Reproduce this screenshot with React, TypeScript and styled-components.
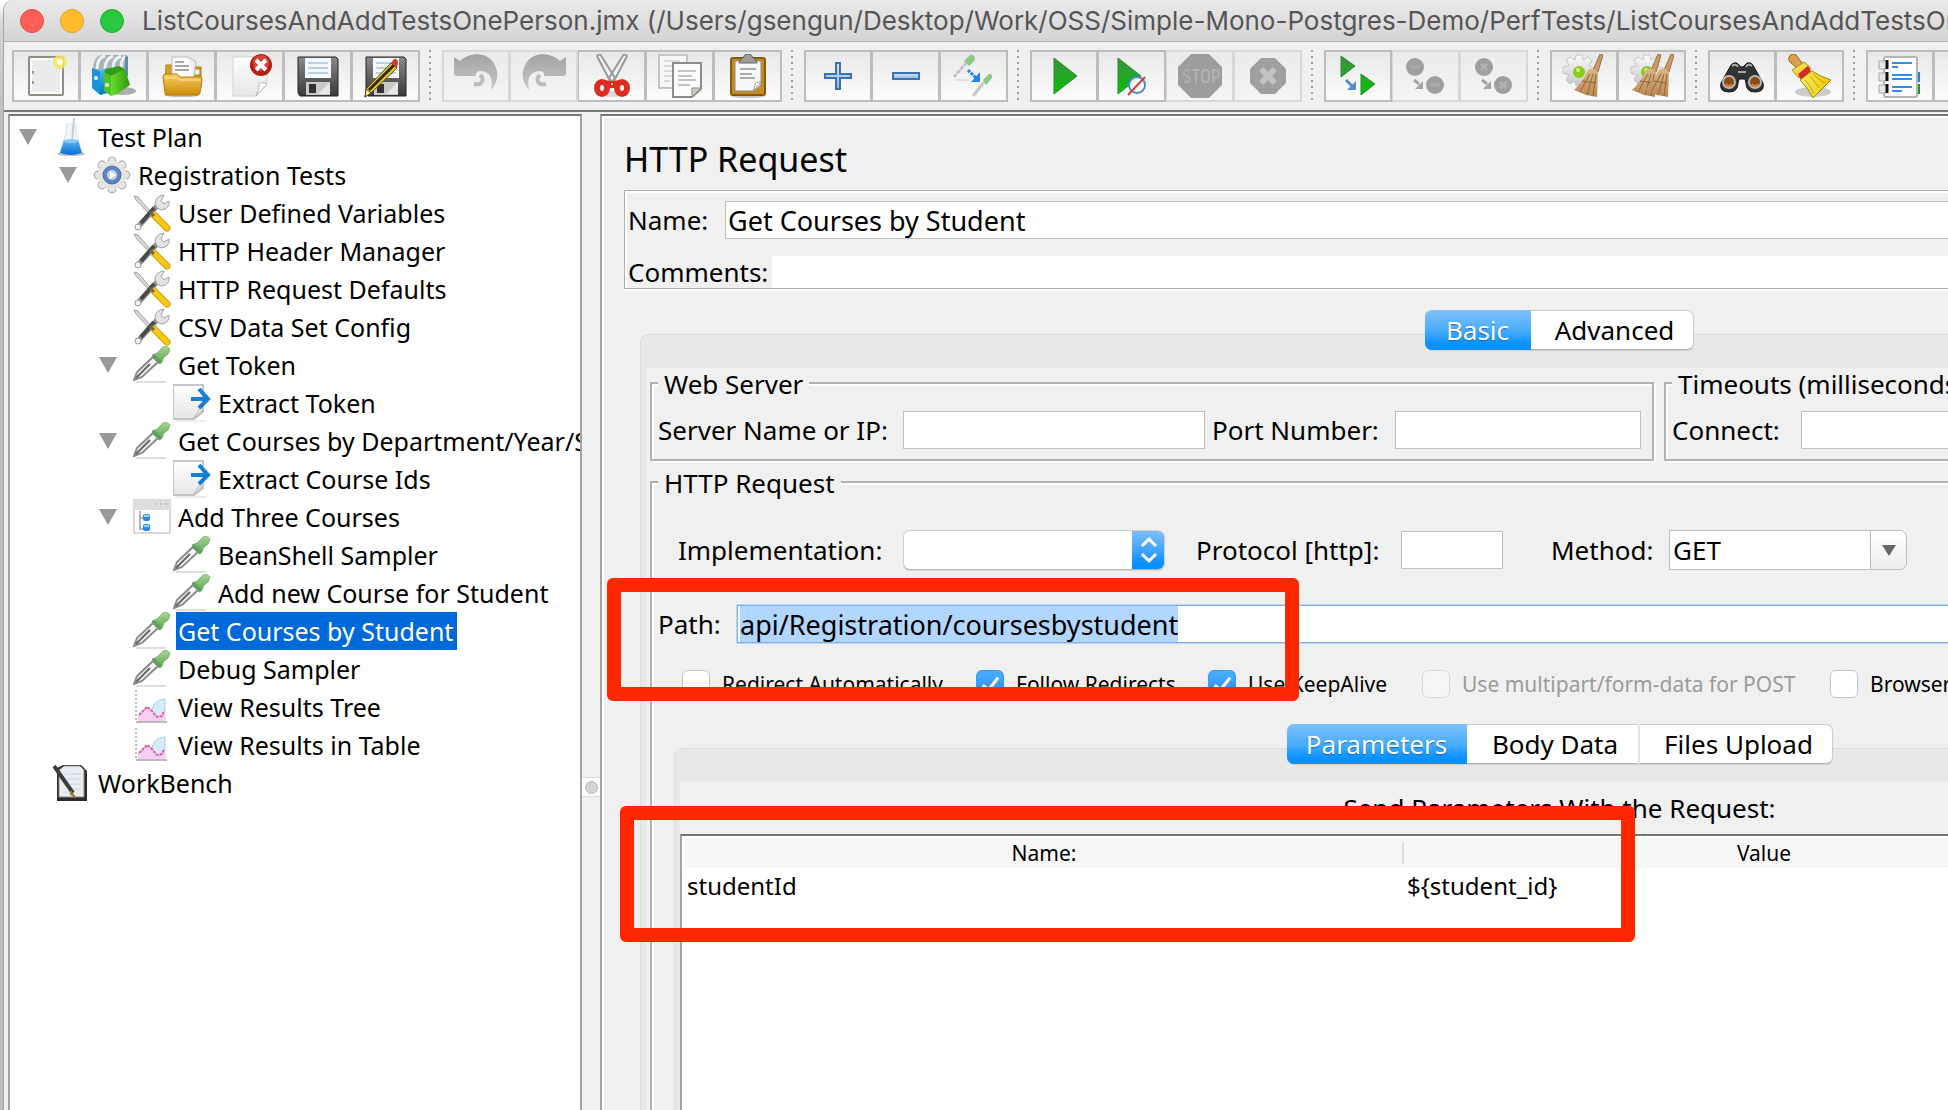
import React, { useEffect, useId, useRef } from "react";
import styled, { createGlobalStyle, css } from "styled-components";

const UI_FONT = '"Noto Sans", "Open Sans", sans-serif';

const GlobalStyle = createGlobalStyle`
  *, *::before, *::after { box-sizing: border-box; }
  html, body { margin: 0; height: 100%; }
  body { background: #c4c4c4; overflow: hidden; font-family: ${UI_FONT}; color: #000; }
  button, input, select { font: inherit; color: inherit; margin: 0; }
`;

/* ---------- window ---------- */

const Backdrop = styled.div`
  height: 100vh;
  padding-left: 4px;
  background: linear-gradient(#fff 0, #d6d6d6 24px, #bcbcbc 120px);
`;

const WindowFrame = styled.div`
  position: relative;
  display: flex;
  flex-direction: column;
  height: 100%;
  overflow: hidden;
  border-radius: 10px 0 0 0;
  background: #f0f0f0;
  box-shadow: -1px 0 0 #a6a6a6;
`;

const TitleBar = styled.header`
  flex: none;
  display: flex;
  align-items: center;
  gap: 16px;
  height: 42px;
  padding: 0 16px;
  background: linear-gradient(#eaeaea, #d4d4d4);
  border-bottom: 1px solid #b3b3b3;
  overflow: hidden;
`;

const LightButton = styled.button<{ $fill: string; $edge: string }>`
  flex: none;
  width: 24px;
  height: 24px;
  padding: 0;
  border-radius: 50%;
  border: 1px solid ${(p) => p.$edge};
  background: ${(p) => p.$fill};
`;

const TitleText = styled.h1`
  margin: 0 0 0 2px;
  font: 400 26px/34px Inter, "Liberation Sans", sans-serif;
  color: #555;
  white-space: nowrap;
`;

/* ---------- toolbar ---------- */

const ToolBar = styled.div`
  flex: none;
  display: flex;
  height: 70px;
  padding: 8px 0 0 8px;
  border-bottom: 2px solid #757575;
  overflow: hidden;
`;

const ToolGroup = styled.div`
  flex: none;
  display: flex;
  height: 52px;
`;

const ToolSeparator = styled.div`
  flex: none;
  width: 2px;
  height: 50px;
  margin: 0 11px 0 9px;
  background: repeating-linear-gradient(#a0a0a0 0 2px, transparent 2px 6px);
`;

const ToolButton = styled.button`
  flex: none;
  display: grid;
  place-items: center;
  width: 68px;
  height: 52px;
  padding: 0;
  border: 2px solid #bdbdbd;
  border-left-width: 1px;
  background: linear-gradient(#e8e8e8, #fcfcfc);

  &:first-child { border-left-width: 2px; }
  &:disabled { border-color: #d8d8d8; background: linear-gradient(#ebebeb, #f4f4f4); }
`;

/* ---------- split panes ---------- */

const Split = styled.div`
  flex: 1;
  display: flex;
  min-height: 0;
  padding: 2px 0 0 4px;
`;

const TreePane = styled.nav`
  flex: none;
  width: 574px;
  padding: 2px 1px 0 0;
  overflow: hidden;
  border: 2px solid #a3a3a3;
  border-top-color: #757575;
  border-bottom: 0;
  background: #fff;
`;

const Divider = styled.div`
  flex: none;
  display: flex;
  width: 18px;
  padding-top: 663px;
`;

const DividerGrip = styled.div`
  display: grid;
  place-items: center;
  width: 18px;
  height: 20px;
  background: #fcfcfc;
  border: solid #dcdcdc;
  border-width: 1px 0;

  &::before {
    content: "";
    width: 13px;
    height: 13px;
    border-radius: 50%;
    border: 1px solid #b8b8b8;
    background: #d4d4d4;
  }
`;

const EditorPane = styled.main`
  flex: 1;
  min-width: 0;
  overflow: hidden;
  border: solid #a3a3a3;
  border-width: 2px 0 0 2px;
  border-top-color: #757575;
  box-shadow: inset 2px 2px 0 #fff;
`;

/* ---------- tree ---------- */

const TreeList = styled.ul`
  margin: 0;
  padding: 0;
  list-style: none;
`;

const TreeRow = styled.li<{ $level: number }>`
  display: flex;
  align-items: center;
  height: 38px;
  padding-left: ${(p) => 9 + p.$level * 40}px;
  font-size: 25px;
  line-height: 38px;
  white-space: nowrap;
`;

const Twisty = styled.button`
  flex: none;
  width: 18px;
  height: 16px;
  margin-right: 16px;
  padding: 0;
  border: 0;
  background: #999;
  clip-path: polygon(0 0, 100% 0, 50% 100%);
`;

const TwistyGap = styled.span`
  flex: none;
  width: 34px;
`;

const TreeLabel = styled.span<{ $selected?: boolean }>`
  margin-left: 5px;
  padding: 0 4px 0 2px;
  ${(p) => p.$selected && css`background: #0069d9; color: #fff;`}
`;

/* ---------- form ---------- */

const Form = styled.form`
  min-width: 1912px;
  padding: 23px 20px 0 22px;
`;

const PageTitle = styled.h2`
  margin: 0 0 11px;
  font-size: 34px;
  font-weight: 400;
  line-height: 40px;
`;

const NameBox = styled.section`
  display: flex;
  flex-direction: column;
  gap: 17px;
  margin-bottom: 21px;
  padding: 10px 4px 0 3px;
  border: 1px solid #b0b0b0;
  box-shadow: inset 2px 2px 0 #fff, 0 2px 0 #fff;
`;

const Row = styled.div<{ $indent?: number }>`
  display: flex;
  align-items: center;
  padding-left: ${(p) => p.$indent ?? 0}px;
  font-size: 26px;
  line-height: 32px;
  white-space: nowrap;
`;

const Label = styled.label<{ $w: number; $before?: number }>`
  flex: none;
  width: ${(p) => p.$w}px;
  margin-left: ${(p) => p.$before ?? 0}px;
`;

const TextField = styled.input<{ $w?: number }>`
  ${(p) => (p.$w ? css`flex: none; width: ${p.$w}px;` : css`flex: 1; min-width: 0;`)}
  height: 38px;
  padding: 0 2px;
  border: 1px solid #c0c0c0;
  border-radius: 0;
  background: #fff;
  font-size: 27px;
  line-height: 32px;
  outline: none;
`;

const PlainField = styled(TextField)`
  height: 32px;
  border: 0;
`;

const PathField = styled(TextField)`
  border-color: #7fb0e4;
  box-shadow: 0 0 0 1px #b9d7f4;
  &::selection { background: #b1d6ff; color: #000; }
`;

const PopUp = styled.span<{ $w: number }>`
  flex: none;
  display: flex;
  width: ${(p) => p.$w}px;
  height: 40px;
  overflow: hidden;
  border: 1px solid #cfcfcf;
  border-bottom-color: #b4b4b4;
  border-radius: 7px;
  background: #fff;
  box-shadow: 0 1px 1px #d8d8d8;
`;

const PopUpCap = styled.span`
  display: grid;
  place-items: center;
  width: 33px;
  margin: -1px;
  background: linear-gradient(#7fc1fd, #3ba2fb 55%, #068fff 85%);
`;

const BareSelect = styled.select`
  flex: 1;
  min-width: 0;
  padding: 0 3px;
  border: 0;
  background: transparent;
  appearance: none;
  outline: none;
`;

const ComboBox = styled.span<{ $w: number }>`
  flex: none;
  display: flex;
  width: ${(p) => p.$w}px;
  height: 40px;
  border: 1px solid #bcbcbc;
  border-radius: 0 7px 7px 0;
  background: #fff;
`;

const ComboCap = styled.span`
  display: grid;
  place-items: center;
  width: 36px;
  border-left: 1px solid #bcbcbc;
  border-radius: 0 7px 7px 0;
  background: linear-gradient(#fff, #ededed);
  box-shadow: 0 1px 1px #c4c4c4;
`;

const Group = styled.fieldset<{ $grow?: boolean }>`
  flex: ${(p) => (p.$grow ? "1" : "none")};
  min-width: 0;
  margin: 0;
  padding: 13px 11px 10px 6px;
  border: 2px solid #b2b2b2;
  box-shadow: inset 2px 2px 0 #fff, 2px 2px 0 #fff;
`;

const RequestGroup = styled(Group)`
  padding: 33px 5px 8px 6px;
`;

const GroupTitle = styled.legend`
  padding: 2px 6px 0;
  background: #f0f0f0;
  font-size: 26px;
  line-height: 28px;
  white-space: nowrap;
`;

const GroupRow = styled.div`
  display: flex;
  gap: 10px;
  margin-bottom: 6px;
`;

const Stack = styled.div`
  display: flex;
  flex-direction: column;
`;

const Space = styled.div<{ $h: number }>`
  height: ${(p) => p.$h}px;
`;

/* ---------- check boxes ---------- */

const CheckRow = styled.div`
  display: grid;
  grid-template-columns: 294px 232px 214px 408px auto;
  padding-left: 24px;
  font-size: 21px;
  line-height: 28px;
  white-space: nowrap;
`;

const CheckLabel = styled.label<{ $dim?: boolean }>`
  display: flex;
  align-items: center;
  gap: 12px;
  color: ${(p) => (p.$dim ? "#9b9b9b" : "#000")};
`;

const CHECK_MARK = css`
  content: "";
  width: 9px;
  height: 17px;
  margin-bottom: 4px;
  border: solid #fff;
  border-width: 0 3px 3px 0;
  transform: rotate(38deg);
`;

const CheckBox = styled.input`
  display: grid;
  place-items: center;
  flex: none;
  width: 28px;
  height: 28px;
  appearance: none;
  border: 1px solid #c2c2c2;
  border-radius: 6px;
  background: #fff;

  &:checked { border-color: #3b9bf5; background: linear-gradient(#4badfb, #1e8ffb); }
  &:checked::before { ${CHECK_MARK} }
  &:disabled { border-color: #d6d6d6; background: #f6f6f6; }
`;

/* ---------- tabs ---------- */

const TabFrame = styled.div<{ $inset: number }>`
  margin: 0 ${(p) => p.$inset}px;
`;

const TabStrip = styled.div`
  position: relative;
  z-index: 1;
  display: flex;
  width: fit-content;
  height: 40px;
  margin: 0 auto -16px;
  border: 1px solid #cdcdcd;
  border-bottom-color: #b0b0b0;
  border-radius: 7px;
  background: #fff;
  box-shadow: 0 1px 1px #d0d0d0;
`;

const Tab = styled.button<{ $w: number }>`
  width: ${(p) => p.$w}px;
  height: 40px;
  margin: -1px 0;
  padding: 0 0 0 6px;
  border: 0;
  border-left: 2px solid #e4e4e4;
  background: transparent;
  font-size: 26px;
  line-height: 32px;

  &[aria-selected="true"] {
    margin-left: -1px;
    padding: 0;
    border: 0;
    border-radius: 7px 0 0 7px;
    background: linear-gradient(#7fc1fd, #4badfb 50%, #0a91ff 85%);
    color: #fff;
    text-shadow: 0 1px 1px #1462ad;
  }
  &[aria-selected="true"] + & { border-left: 0; }
`;

const TabBody = styled.div`
  padding: 33px 5px 5px;
  border: 1px solid #dddddd;
  border-radius: 8px;
  background: #e8e8e8;
`;

const TabContent = styled.div<{ $side: number }>`
  padding: 0 ${(p) => p.$side}px;
  background: #f0f0f0;
`;

/* ---------- parameter table ---------- */

const Caption = styled.p`
  margin: 0;
  font-size: 26px;
  line-height: 52px;
  text-align: center;
`;

const TableWell = styled.div`
  min-height: 420px;
  padding: 2px;
  border: 2px solid #a3a3a3;
  border-top-color: #757575;
  background: #fff;
`;

const ParamTable = styled.table`
  width: 100%;
  border-collapse: collapse;
  table-layout: fixed;
`;

const HeadCell = styled.th`
  height: 30px;
  padding: 0;
  background: #f7f7f7 linear-gradient(#e0e0e0, #e0e0e0) right center / 2px 22px no-repeat;
  font-size: 21px;
  font-weight: 400;
  line-height: 30px;
`;

const Cell = styled.td`
  height: 36px;
  padding: 0 3px;
  font-size: 24px;
  line-height: 36px;
`;

const Column = styled.col<{ $w?: number }>`
  width: ${(p) => (p.$w ? `${p.$w}px` : "auto")};
`;

/* ---------- markers drawn over the window ---------- */

const Marker = styled.div<{ $x: number; $y: number; $w: number; $h: number }>`
  position: absolute;
  left: ${(p) => p.$x}px;
  top: ${(p) => p.$y}px;
  width: ${(p) => p.$w}px;
  height: ${(p) => p.$h}px;
  border: 14px solid #ff2700;
  border-radius: 6px;
  pointer-events: none;
`;

/* ---------- toolbar icons, 44 x 44 ---------- */

const Svg44 = ({ children }: { children: React.ReactNode }) => (
  <svg width="44" height="44" viewBox="0 0 44 44" aria-hidden="true">{children}</svg>
);

const Grad = ({ id, a, b, flat }: { id: string; a: string; b: string; flat?: boolean }) => (
  <linearGradient id={id} x1="0" y1="0" x2={flat ? "1" : "0"} y2={flat ? "0" : "1"}>
    <stop offset="0" stopColor={a} />
    <stop offset="1" stopColor={b} />
  </linearGradient>
);

const DefsHolder = styled.svg`
  position: absolute;
`;

const SharedDefs = () => (
  <DefsHolder width="0" height="0" aria-hidden="true">
    <defs>
      <Grad id="gPaper" a="#ffffff" b="#e6e6e6" />
      <Grad id="gFolder" a="#fbd06a" b="#c98a05" />
      <Grad id="gSteel" a="#8a8a8a" b="#3a3a3a" />
      <Grad id="gGrey" a="#a2a2a2" b="#c9c9c9" />
      <Grad id="gPlay" a="#3f8f42" b="#06c206" />
      <Grad id="gPlus" a="#dce9f8" b="#8db5e2" />
      <Grad id="gBlueBook" a="#4fc0f0" b="#0879bd" />
      <Grad id="gGreenBook" a="#6edb2c" b="#2a9a08" flat />
      <Grad id="gBroom" a="#dcb685" b="#b88752" />
      <Grad id="gYellow" a="#f8ea66" b="#ecc800" flat />
      <Grad id="gGear" a="#fafafa" b="#c8c8c8" />
      <Grad id="gWater" a="#5fb4f4" b="#0a6fd0" />
      <Grad id="gStopper" a="#a9d892" b="#56a052" />
    </defs>
  </DefsHolder>
);

const NewIcon = () => (
  <Svg44>
    <rect x="5" y="3" width="34" height="38" rx="1" fill="#ebebeb" stroke="#8d8d84" strokeWidth="2" />
    <rect x="7" y="5" width="30" height="34" fill="none" stroke="#fff" strokeWidth="2" />
    <path d="M9 17v3M9 27v3" stroke="#999" strokeWidth="2" />
    <circle cx="36" cy="8" r="7" fill="#f3e45c" opacity=".85" />
    <circle cx="36" cy="8" r="3" fill="#fffde0" />
  </Svg44>
);

const TemplatesIcon = () => (
  <Svg44>
    <ellipse cx="31" cy="37" rx="13" ry="4" fill="#000" opacity=".3" />
    <path d="M1 16C1 6 5 1 10 1l25 0v20L22 24z" fill="#a9b4ba" />
    <path d="M5 15C5 7 8 3 13 2M13 15c0-6 3-11 8-13M21 14c0-6 3-10 8-12M29 14c0-5 1-9 4-12" stroke="#eef2f4" strokeWidth="3" fill="none" />
    <path d="M0 14l8 3v24l-8-7z" fill="#1795d8" />
    <path d="M8 17l8-4v26l-8 2z" fill="url(#gBlueBook)" />
    <path d="M33 3l3-1v20h-3z" fill="#5a8cab" />
    <circle cx="4" cy="24" r="2" fill="#fff" />
    <path d="M12 18l7 4v20l-7-5z" fill="#4cc428" />
    <path d="M19 22l14-7 5 16-13 9-6 2z" fill="url(#gGreenBook)" />
    <path d="M14 15l13-3 6 3-14 7-7-4z" fill="#2f9e14" />
    <circle cx="15" cy="31" r="2" fill="#fff" />
  </Svg44>
);

const OpenIcon = () => (
  <Svg44>
    <ellipse cx="22" cy="41" rx="18" ry="2" fill="#000" opacity=".25" />
    <path d="M6 11h10v10h24V15h-6l0-2h7v20H5z" fill="#d99f22" stroke="#b37c10" />
    <path d="M12 3h16l6 7v16H12z" fill="#fbfbfb" stroke="#b9b9b9" />
    <path d="M15 8h9M15 12h14M15 16h14" stroke="#a8a8a8" strokeWidth="2" />
    <path d="M28 3l8 5-2 14" fill="#eee" stroke="#b9b9b9" />
    <path d="M3 23q0-3 3-3h11l3 3h20q2 0 2 3l-2 13q-1 2-3 2H7q-2 0-2-2z" fill="url(#gFolder)" stroke="#b57d0d" />
    <path d="M5 24h12l3 2h20" stroke="#fde4a0" fill="none" />
  </Svg44>
);

const CloseIcon = () => (
  <Svg44>
    <path d="M5 3h34v27l-11 12H5z" fill="url(#gPaper)" stroke="#d4d4d4" />
    <path d="M39 30c-4-2-7-1-8 0 0 4-1 8-3 12z" fill="#fff" stroke="#b5b5b5" />
    <circle cx="33" cy="11" r="11" fill="#b91c12" />
    <circle cx="33" cy="9" r="8" fill="#dc5a4c" opacity=".7" />
    <path d="M28 6l10 10M38 6L28 16" stroke="#fff" strokeWidth="4" />
  </Svg44>
);

const FloppyBody = () => (
  <>
    <path d="M2 3h38l2 2v37H4l-2-3z" fill="url(#gSteel)" stroke="#222" />
    <rect x="9" y="4" width="26" height="20" fill="#f4f9ff" />
    <path d="M12 9h20M12 14h20M12 19h20" stroke="#b9cfe2" strokeWidth="2" />
    <path d="M10 28h24v13H10z" fill="#c9c9c9" />
    <rect x="13" y="30" width="7" height="9" fill="#333" />
    <path d="M22 40l12-12v12z" fill="#e7e7e7" />
  </>
);

const SaveIcon = () => <Svg44><FloppyBody /></Svg44>;

const SaveAsIcon = () => (
  <Svg44>
    <FloppyBody />
    <path d="M2 35L27 9l6 5L7 39l-6 4z" fill="#e9c72c" stroke="#5b4a0a" />
    <path d="M5 36l25-25" stroke="#2b2b2b" strokeWidth="3" />
    <path d="M27 9l3-4q3-1 4 3l-1 6z" fill="#d8382c" />
    <path d="M2 35l5 4-6 4z" fill="#efe3c2" stroke="#5b4a0a" />
  </Svg44>
);

const UndoShape = () => (
  <>
    <path d="M0 3l6 4C16-2 32-2 39 8c7 10 5 20-2 28 2-9 0-16-6-18-5-2-10-1-9 4H3q-3 0-3-3z" fill="url(#gGrey)" />
    <path d="M20 30c8 2 11-5 6-9" fill="none" stroke="#bdbdbd" strokeWidth="4" />
  </>
);

const UndoIcon = () => <Svg44><UndoShape /></Svg44>;
const RedoIcon = () => <Svg44><g transform="matrix(-1 0 0 1 44 0)"><UndoShape /></g></Svg44>;

const CutIcon = () => (
  <Svg44>
    <ellipse cx="22" cy="40" rx="15" ry="3" fill="#000" opacity=".12" />
    <path d="M7 2l3-2 15 24-4 5zM37 2l-3-2-15 24 4 5z" fill="#f2f2f2" stroke="#9b9b9b" strokeWidth="2" />
    <ellipse cx="12" cy="34" rx="5" ry="6" fill="none" stroke="#e02c20" strokeWidth="6" />
    <ellipse cx="32" cy="34" rx="5" ry="6" fill="none" stroke="#e02c20" strokeWidth="6" />
    <path d="M13 26l9 1 9-1-6 8h-6z" fill="#e02c20" />
    <circle cx="22" cy="30" r="1" fill="#fff" />
  </Svg44>
);

const CopyIcon = () => (
  <Svg44>
    <path d="M1 1h28v33H1z" fill="#f7f7f7" stroke="#c4c4c4" strokeWidth="2" />
    <path d="M6 7h16M6 12h8M6 17h8M6 22h8M6 27h6" stroke="#dadada" strokeWidth="2" />
    <path d="M15 9h28v26l-9 8H15z" fill="#fcfcfc" stroke="#8d8d86" strokeWidth="2" />
    <path d="M20 17h18M20 22h14M20 26h18M20 31h12" stroke="#c2c2c2" strokeWidth="2" />
    <path d="M43 34h-9v9z" fill="#c9c9c4" stroke="#8d8d86" />
  </Svg44>
);

const PasteIcon = () => (
  <Svg44>
    <ellipse cx="22" cy="42" rx="17" ry="2" fill="#000" opacity=".2" />
    <rect x="5" y="4" width="34" height="37" rx="2" fill="#c48b28" stroke="#87590a" strokeWidth="2" />
    <path d="M9 7h26v24l-7 6H9z" fill="#f8f8f8" stroke="#8d8d86" />
    <path d="M14 15h16M14 20h12M14 24h15" stroke="#aaa" strokeWidth="2" />
    <path d="M35 28q-6 0-6 3l-2 6z" fill="#fff" stroke="#9a9a95" />
    <path d="M13 9q0-4 4-5 1-4 5-4t5 4q4 1 4 5z" fill="#9b9b97" stroke="#666" />
  </Svg44>
);

const PlusIcon = () => (
  <Svg44>
    <path d="M20 9h4v11h11v4H24v11h-4V24H9v-4h11z" fill="url(#gPlus)" stroke="#3c72b4" strokeWidth="2" />
  </Svg44>
);

const MinusIcon = () => (
  <Svg44>
    <rect x="9" y="19" width="26" height="6" fill="url(#gPlus)" stroke="#3c72b4" strokeWidth="2" />
  </Svg44>
);

const ToggleIcon = () => (
  <Svg44>
    <path d="M2 23L14 9" stroke="#c4c4c4" strokeWidth="3" strokeDasharray="4 1" />
    <path d="M12 7l6-6q5-1 5 5l-6 6z" fill="#8fc783" />
    <path d="M3 26h14" stroke="#e2e2e2" strokeWidth="2" />
    <path d="M21 42l11-14" stroke="#c9c9c9" strokeWidth="3" />
    <path d="M31 26l6-6q4 0 3 4l-6 7z" fill="#8fc783" />
    <path d="M16 16l8 8" stroke="#1e86f4" strokeWidth="3" strokeDasharray="3 1" />
    <path d="M28 18v10H19z" fill="#1e86f4" />
  </Svg44>
);

const PlayIcon = () => (
  <Svg44>
    <path d="M12 4l23 18-23 18z" fill="url(#gPlay)" stroke="#2a8a2e" />
  </Svg44>
);

const PlayNoTimersIcon = () => (
  <Svg44>
    <path d="M8 4l23 18L8 40z" fill="url(#gPlay)" stroke="#2a8a2e" />
    <circle cx="27" cy="31" r="8" fill="#fff" fillOpacity=".85" stroke="#4a86c8" strokeWidth="2" />
    <path d="M18 41l17-18" stroke="#d83a3a" strokeWidth="2" />
  </Svg44>
);

const StopIcon = () => (
  <Svg44>
    <path d="M13 0h18l13 13v18L31 44H13L0 31V13z" fill="#9d9d9d" />
    <g fill="none" stroke="#b0b0b0" strokeWidth="2">
      <path d="M12 17q-6-3-6 2 0 2 3 3t3 3q-1 5-6 2M14 16h8M18 16v13M35 29V16h3q3 0 3 4t-6 4" />
      <rect x="24" y="16" width="7" height="12" rx="3" />
    </g>
  </Svg44>
);

const OctagonX = ({ x, y, s }: { x: number; y: number; s: number }) => (
  <g transform={`translate(${x} ${y}) scale(${s})`}>
    <path d="M11 0h14l11 11v14L25 36H11L0 25V11z" fill="#9f9f9f" />
    <path d="M11 11l14 14M25 11L11 25" stroke="#c2c2c2" strokeWidth="6" />
  </g>
);

const ShutdownIcon = () => <Svg44><OctagonX x={4} y={4} s={1} /></Svg44>;

const RemoteStartIcon = () => (
  <Svg44>
    <path d="M5 2l14 10L5 23zM25 20l14 10-14 11z" fill="url(#gPlay)" stroke="#2a8a2e" />
    <path d="M10 26l6 6" stroke="#5a8cc8" strokeWidth="3" />
    <path d="M20 27v9h-9z" fill="#5a8cc8" />
  </Svg44>
);

const GreyArrow = () => (
  <>
    <path d="M10 26l5 4" stroke="#a4a4a4" strokeWidth="3" />
    <path d="M19 27v8h-8z" fill="#a4a4a4" />
  </>
);

const RemoteStopIcon = () => (
  <Svg44>
    <circle cx="11" cy="13" r="9" fill="#9f9f9f" />
    <circle cx="31" cy="31" r="9" fill="#9f9f9f" />
    <path d="M6 13h10M26 31h10" stroke="#a9a9a9" strokeWidth="4" />
    <GreyArrow />
  </Svg44>
);

const RemoteShutdownIcon = () => (
  <Svg44>
    <circle cx="12" cy="13" r="9" fill="#9f9f9f" />
    <circle cx="31" cy="31" r="9" fill="#9f9f9f" />
    <path d="M9 10l6 6M15 10l-6 6M28 28l6 6M34 28l-6 6" stroke="#b2b2b2" strokeWidth="3" />
    <GreyArrow />
  </Svg44>
);

const GearShape = () => (
  <>
    <path d="M14 1h6l1 5 5-3 4 4-3 5 6 2v6l-6 1 3 6-4 3-5-3-1 5h-6l-1-5-5 3-4-4 3-5-6-2v-6l6-1-3-6 4-3 5 3z" fill="url(#gGear)" stroke="#c4c4c4" />
    <circle cx="17" cy="18" r="6" fill="#86cc1c" />
    <circle cx="16" cy="16" r="2" fill="#d2f08c" />
  </>
);

const BroomShape = () => (
  <>
    <path d="M38 0l3 1-5 17-5-2z" fill="#c79b68" stroke="#9c7344" />
    <path d="M26 16q5-4 10 2l-1 25-11-2-12-5q9-8 14-20z" fill="url(#gBroom)" />
    <path d="M28 20L18 38M31 20l-6 21M34 20l-3 22M20 27l14 2" stroke="#8e673b" fill="none" />
  </>
);

const ClearIcon = () => <Svg44><GearShape /><BroomShape /></Svg44>;
const ClearAllIcon = () => (
  <Svg44>
    <GearShape />
    <g transform="translate(-10 0)"><BroomShape /></g>
    <g transform="translate(3 0)"><BroomShape /></g>
  </Svg44>
);

const SearchIcon = () => (
  <Svg44>
    <path d="M10 13q2-5 7-4l4 4h2l4-4q5-1 7 4l9 16q2 9-8 9-9 0-9-9l-1-4h-6l-1 4q0 9-9 9-10 0-8-9z" fill="#333" stroke="#111" />
    <path d="M12 12q4-3 6 1M26 13q2-4 6-1M18 18h8" stroke="#a9a9a9" strokeWidth="2" fill="none" />
    <circle cx="9" cy="28" r="6" fill="#8a4a14" stroke="#b8b8b8" strokeWidth="2" />
    <circle cx="35" cy="28" r="6" fill="#8a4a14" stroke="#b8b8b8" strokeWidth="2" />
    <path d="M6 30q3 4 6 0M32 30q3 4 6 0" stroke="#d98a35" strokeWidth="2" fill="none" />
  </Svg44>
);

const ResetSearchIcon = () => (
  <Svg44>
    <ellipse cx="25" cy="38" rx="18" ry="5" fill="#000" opacity=".18" />
    <path d="M1 3q3-5 7-2l6 8-5 5-7-6q-2-2-1-5z" fill="#d9a04c" stroke="#8f6118" />
    <path d="M4 16l12-8 7 6-12 10z" fill="#f0d84a" stroke="#b58a10" />
    <path d="M10 20l10-8 3 5-10 9z" fill="#d42a1c" />
    <path d="M12 26l12-9q9 6 19 9L25 44q-4-9-13-18z" fill="url(#gYellow)" stroke="#a88508" />
    <path d="M17 26q6 6 9 14M22 22q5 6 9 12M25 20q6 6 12 9" stroke="#c4a40a" fill="none" />
  </Svg44>
);

const FunctionIcon = () => (
  <Svg44>
    <path d="M36 18h6v10h-6z" fill="#2b7ce0" />
    <path d="M36 30h6v10h-6z" fill="#1d9a1d" />
    <rect x="6" y="3" width="33" height="40" rx="2" fill="#fff" stroke="#b5b5b5" strokeWidth="2" />
    <path d="M1 7h8v8H1zM1 19h8v8H1zM1 31h8v8H1z" fill="#e6e6e6" stroke="#aaa" />
    <path d="M9 6v9M9 18v9M9 30v9" stroke="#111" strokeWidth="3" />
    <path d="M14 9h20M14 13h6M14 21h20M14 25h20M14 33h20M14 37h10" stroke="#2f8df5" strokeWidth="2" />
  </Svg44>
);

/* ---------- tree icons, 38 x 38 ---------- */

const TreeGlyph = styled.svg`
  flex: none;
  width: 38px;
  height: 38px;
`;

const Svg38 = ({ children }: { children: React.ReactNode }) => (
  <TreeGlyph viewBox="0 0 38 38" aria-hidden="true">{children}</TreeGlyph>
);

const FlaskIcon = () => (
  <Svg38>
    <ellipse cx="18" cy="36" rx="14" ry="2" fill="#777" opacity=".5" />
    <path d="M13 6h10v8l6 21q-11 4-22 0l6-21z" fill="#f0f5f9" stroke="#dde4e9" />
    <path d="M11 22h14l4 13q-11 4-22 0z" fill="url(#gWater)" />
    <path d="M21 0l-2 24" stroke="#c6ced4" strokeWidth="2" />
    <ellipse cx="18" cy="23" rx="7" ry="2" fill="#8cccf8" />
  </Svg38>
);

const ThreadIcon = () => (
  <Svg38>
    <g fill="#e6e6e6" stroke="#a9a9a9">
      {[0, 45, 90, 135, 180, 225, 270, 315].map((a) => (
        <circle key={a} cx="19" cy="5" r="4" transform={`rotate(${a} 19 19)`} />
      ))}
    </g>
    <circle cx="19" cy="19" r="14" fill="#e4e4e4" />
    <circle cx="19" cy="19" r="9" fill="#5d86c4" stroke="#44699f" />
    <circle cx="19" cy="19" r="5" fill="#c3d3ea" />
    <path d="M17 15l6 4-6 4z" fill="#fff" />
  </Svg38>
);

const ToolsIcon = () => (
  <Svg38>
    <path d="M1 2l4 1 13 15-2 2L3 6z" fill="#d8d8d8" stroke="#a2a2a2" />
    <path d="M4 34L24 12" stroke="#8a8a8a" strokeWidth="5" />
    <path d="M8 29l13-15" stroke="#4a4a4a" strokeWidth="4" />
    <circle cx="5" cy="33" r="3" fill="#f4f4f4" stroke="#999" />
    <path d="M22 10q0-8 9-9l-3 6 3 3 5-3q1 8-8 9l-4-2z" fill="#e4e4e4" stroke="#a2a2a2" />
    <path d="M21 21l13 13" stroke="#d49f00" strokeWidth="7" strokeLinecap="round" />
    <path d="M21 21l13 13" stroke="#f7c915" strokeWidth="5" strokeLinecap="round" />
    <path d="M17 18l4 4" stroke="#666" strokeWidth="3" />
  </Svg38>
);

const DropperIcon = () => (
  <Svg38>
    <path d="M3 36h30" stroke="#dedede" strokeWidth="2" />
    <path d="M1 34l3-8L20 11l5 5L9 31z" fill="#f4f4f4" stroke="#8b8b8b" strokeWidth="2" />
    <path d="M3 32l14-14" stroke="#666" strokeWidth="2" />
    <path d="M19 9l5-2 6-6q4-2 7 2-1 6-6 8l-2 5-3 2z" fill="url(#gStopper)" stroke="#7eb877" />
    <path d="M20 9l8 8" stroke="#5d9f5c" strokeWidth="3" />
  </Svg38>
);

const ExtractIcon = () => (
  <Svg38>
    <path d="M3 37h30" stroke="#d8d8d8" strokeWidth="1" />
    <path d="M0 1h30v27l-9 7H0z" fill="url(#gPaper)" stroke="#c4c4c4" strokeWidth="2" />
    <path d="M28 23l-8 12M30 25l-8 9" stroke="#b8b8b8" strokeWidth="1" />
    <path d="M18 15h16M26 5l9 10-9 9" stroke="#1680d8" strokeWidth="4" fill="none" />
  </Svg38>
);

const ControllerIcon = () => (
  <Svg38>
    <rect x="1" y="2" width="36" height="33" fill="#fff" stroke="#d8d8d8" strokeWidth="2" />
    <path d="M0 2h38v10H0z" fill="#dedede" />
    <path d="M22 6h2M27 6h2M32 6h2" stroke="#c4c4c4" strokeWidth="2" />
    <path d="M7 13v18h5M7 20h4" stroke="#b5b5b5" strokeWidth="2" fill="none" />
    <rect x="10" y="16" width="7" height="7" rx="2" fill="#2488e4" />
    <rect x="10" y="26" width="7" height="7" rx="2" fill="#2488e4" />
    <path d="M11 18h5M11 28h5" stroke="#a4d3fb" strokeWidth="2" />
  </Svg38>
);

const ResultsIcon = () => (
  <Svg38>
    <path d="M3 2v32" stroke="#bbb" strokeWidth="2" strokeDasharray="2 2" />
    <path d="M3 34h31" stroke="#bbb" strokeWidth="2" />
    <path d="M19 27q-1-15 13-16v21z" fill="#d6ebfd" stroke="#8dbbe8" strokeDasharray="2 1" />
    <path d="M5 33v-6l9-8 4 3 6 8 8-7v10z" fill="#fbccf4" />
    <path d="M6 27l8-8 4 3 6 7 5-1 2-5" stroke="#d8659a" strokeWidth="2" strokeDasharray="3 1" fill="none" />
  </Svg38>
);

const WorkBenchIcon = () => (
  <Svg38>
    <path d="M4 4l6-3h18l6 6v30H4z" fill="#2b2b2b" />
    <path d="M6 6l5-4h16l4 4v27H6z" fill="#e9eef2" stroke="#888" />
    <path d="M12 10h16M14 15h14M17 20h11M20 25h8M10 28h6" stroke="#bfd3e6" strokeWidth="1" />
    <path d="M1 2l19 27" stroke="#3d3d3d" strokeWidth="4" />
    <path d="M18 27l5 7-6-4z" fill="#9b7a33" stroke="#9b7a33" />
  </Svg38>
);

/* ---------- data ---------- */

type Tool = { name: string; Icon: React.FC; off?: boolean };

const TOOL_GROUPS: Tool[][] = [
  [
    { name: "New", Icon: NewIcon },
    { name: "Templates", Icon: TemplatesIcon },
    { name: "Open", Icon: OpenIcon },
    { name: "Close", Icon: CloseIcon },
    { name: "Save", Icon: SaveIcon },
    { name: "Save as", Icon: SaveAsIcon },
  ],
  [
    { name: "Undo", Icon: UndoIcon, off: true },
    { name: "Redo", Icon: RedoIcon, off: true },
    { name: "Cut", Icon: CutIcon },
    { name: "Copy", Icon: CopyIcon },
    { name: "Paste", Icon: PasteIcon },
  ],
  [
    { name: "Expand all", Icon: PlusIcon },
    { name: "Collapse all", Icon: MinusIcon },
    { name: "Toggle", Icon: ToggleIcon },
  ],
  [
    { name: "Start", Icon: PlayIcon },
    { name: "Start no pauses", Icon: PlayNoTimersIcon },
    { name: "Stop", Icon: StopIcon, off: true },
    { name: "Shutdown", Icon: ShutdownIcon, off: true },
  ],
  [
    { name: "Remote start all", Icon: RemoteStartIcon },
    { name: "Remote stop all", Icon: RemoteStopIcon, off: true },
    { name: "Remote shutdown all", Icon: RemoteShutdownIcon, off: true },
  ],
  [
    { name: "Clear", Icon: ClearIcon },
    { name: "Clear all", Icon: ClearAllIcon },
  ],
  [
    { name: "Search", Icon: SearchIcon },
    { name: "Reset search", Icon: ResetSearchIcon },
  ],
  [
    { name: "Function helper", Icon: FunctionIcon },
    { name: "Help", Icon: NewIcon },
  ],
];

type Node = { level: number; label: string; Icon: React.FC; open?: boolean; selected?: boolean };

const TREE: Node[] = [
  { level: 0, label: "Test Plan", Icon: FlaskIcon, open: true },
  { level: 1, label: "Registration Tests", Icon: ThreadIcon, open: true },
  { level: 2, label: "User Defined Variables", Icon: ToolsIcon },
  { level: 2, label: "HTTP Header Manager", Icon: ToolsIcon },
  { level: 2, label: "HTTP Request Defaults", Icon: ToolsIcon },
  { level: 2, label: "CSV Data Set Config", Icon: ToolsIcon },
  { level: 2, label: "Get Token", Icon: DropperIcon, open: true },
  { level: 3, label: "Extract Token", Icon: ExtractIcon },
  { level: 2, label: "Get Courses by Department/Year/Semester", Icon: DropperIcon, open: true },
  { level: 3, label: "Extract Course Ids", Icon: ExtractIcon },
  { level: 2, label: "Add Three Courses", Icon: ControllerIcon, open: true },
  { level: 3, label: "BeanShell Sampler", Icon: DropperIcon },
  { level: 3, label: "Add new Course for Student", Icon: DropperIcon },
  { level: 2, label: "Get Courses by Student", Icon: DropperIcon, selected: true },
  { level: 2, label: "Debug Sampler", Icon: DropperIcon },
  { level: 2, label: "View Results Tree", Icon: ResultsIcon },
  { level: 2, label: "View Results in Table", Icon: ResultsIcon },
  { level: 0, label: "WorkBench", Icon: WorkBenchIcon },
];

const OPTIONS = [
  { label: "Redirect Automatically", on: false },
  { label: "Follow Redirects", on: true },
  { label: "Use KeepAlive", on: true },
  { label: "Use multipart/form-data for POST", on: false, dim: true },
  { label: "Browser-compatible headers", on: false },
];

/* ---------- parts ---------- */

const Tabs = ({ items }: { items: { label: string; w: number }[] }) => (
  <TabStrip role="tablist">
    {items.map((t, i) => (
      <Tab key={t.label} type="button" role="tab" aria-selected={i === 0} $w={t.w}>
        {t.label}
      </Tab>
    ))}
  </TabStrip>
);

const Field = ({ label, labelWidth, width, before }: { label: string; labelWidth: number; width?: number; before?: number }) => {
  const id = useId();
  return (
    <>
      <Label htmlFor={id} $w={labelWidth} $before={before}>{label}</Label>
      <TextField id={id} $w={width} />
    </>
  );
};

const ElementTree = () => (
  <TreePane aria-label="Test plan">
    <TreeList>
      {TREE.map(({ level, label, Icon, open, selected }) => (
        <TreeRow key={label} $level={level}>
          {open ? <Twisty type="button" aria-label={`Collapse ${label}`} /> : <TwistyGap />}
          <Icon />
          <TreeLabel $selected={selected}>{label}</TreeLabel>
        </TreeRow>
      ))}
    </TreeList>
  </TreePane>
);

const Parameters = () => (
  <TabFrame $inset={16}>
    <Tabs items={[{ label: "Parameters", w: 180 }, { label: "Body Data", w: 171 }, { label: "Files Upload", w: 194 }]} />
    <TabBody>
      <TabContent $side={0}>
        <Caption>Send Parameters With the Request:</Caption>
        <TableWell>
          <ParamTable>
            <colgroup>
              <Column $w={720} />
              <Column $w={720} />
              <Column />
            </colgroup>
            <thead>
              <tr>
                <HeadCell>Name:</HeadCell>
                <HeadCell>Value</HeadCell>
                <HeadCell />
              </tr>
            </thead>
            <tbody>
              <tr>
                <Cell>studentId</Cell>
                <Cell>{"${student_id}"}</Cell>
                <Cell />
              </tr>
            </tbody>
          </ParamTable>
        </TableWell>
      </TabContent>
    </TabBody>
  </TabFrame>
);

const RequestEditor = () => {
  const pathRef = useRef<HTMLInputElement>(null);
  useEffect(() => {
    pathRef.current?.focus({ preventScroll: true });
    pathRef.current?.select();
  }, []);

  return (
    <EditorPane>
      <Form onSubmit={(e) => e.preventDefault()}>
        <PageTitle>HTTP Request</PageTitle>
        <NameBox>
          <Row>
            <Label htmlFor="name" $w={97}>Name:</Label>
            <TextField id="name" defaultValue="Get Courses by Student" />
          </Row>
          <Row>
            <Label htmlFor="comments" $w={144}>Comments:</Label>
            <PlainField id="comments" />
          </Row>
        </NameBox>
        <TabFrame $inset={16}>
          <Tabs items={[{ label: "Basic", w: 106 }, { label: "Advanced", w: 162 }]} />
          <TabBody>
            <TabContent $side={4}>
              <GroupRow>
                <Group>
                  <GroupTitle>Web Server</GroupTitle>
                  <Row>
                    <Field label="Server Name or IP:" labelWidth={245} width={302} />
                    <Field label="Port Number:" labelWidth={183} width={246} before={7} />
                  </Row>
                </Group>
                <Group $grow>
                  <GroupTitle>Timeouts (milliseconds)</GroupTitle>
                  <Row>
                    <Field label="Connect:" labelWidth={129} />
                  </Row>
                </Group>
              </GroupRow>
              <RequestGroup>
                <GroupTitle>HTTP Request</GroupTitle>
                <Stack>
                  <Row $indent={20}>
                    <Label htmlFor="impl" $w={225}>Implementation:</Label>
                    <PopUp $w={262}>
                      <BareSelect id="impl" defaultValue="">
                        <option value="" />
                      </BareSelect>
                      <PopUpCap>
                        <svg width="18" height="28" viewBox="0 0 18 28" fill="none" stroke="#fff" strokeWidth="3" aria-hidden="true">
                          <path d="M2 10l7-7 7 7M2 18l7 7 7-7" />
                        </svg>
                      </PopUpCap>
                    </PopUp>
                    <Field label="Protocol [http]:" labelWidth={205} width={102} before={31} />
                    <Label htmlFor="method" $w={118} $before={48}>Method:</Label>
                    <ComboBox $w={238}>
                      <BareSelect id="method" defaultValue="GET">
                        <option>GET</option>
                      </BareSelect>
                      <ComboCap>
                        <svg width="14" height="11" viewBox="0 0 14 11" aria-hidden="true">
                          <path d="M0 0h14L7 11z" fill="#666" />
                        </svg>
                      </ComboCap>
                    </ComboBox>
                  </Row>
                  <Space $h={35} />
                  <Row>
                    <Label htmlFor="path" $w={79}>Path:</Label>
                    <PathField id="path" ref={pathRef} defaultValue="api/Registration/coursesbystudent" />
                  </Row>
                  <Space $h={27} />
                  <CheckRow>
                    {OPTIONS.map((o) => (
                      <CheckLabel key={o.label} $dim={o.dim}>
                        <CheckBox type="checkbox" defaultChecked={o.on} disabled={o.dim} />
                        {o.label}
                      </CheckLabel>
                    ))}
                  </CheckRow>
                  <Space $h={26} />
                  <Parameters />
                </Stack>
              </RequestGroup>
            </TabContent>
          </TabBody>
        </TabFrame>
      </Form>
    </EditorPane>
  );
};

export default function App() {
  return (
    <Backdrop>
      <GlobalStyle />
      <SharedDefs />
      <WindowFrame>
        <TitleBar>
          <LightButton aria-label="Close window" $fill="#ff5f57" $edge="#e2463f" />
          <LightButton aria-label="Minimize window" $fill="#ffbd2e" $edge="#e0a028" />
          <LightButton aria-label="Zoom window" $fill="#28c941" $edge="#1dad2c" />
          <TitleText>
            ListCoursesAndAddTestsOnePerson.jmx (/Users/gsengun/Desktop/Work/OSS/Simple-Mono-Postgres-Demo/PerfTests/ListCoursesAndAddTestsOnePerson.jmx)
          </TitleText>
        </TitleBar>
        <ToolBar role="toolbar">
          {TOOL_GROUPS.map((group, i) => (
            <React.Fragment key={group[0].name}>
              {i > 0 && <ToolSeparator />}
              <ToolGroup>
                {group.map(({ name, Icon, off }) => (
                  <ToolButton key={name} type="button" aria-label={name} disabled={off}>
                    <Icon />
                  </ToolButton>
                ))}
              </ToolGroup>
            </React.Fragment>
          ))}
        </ToolBar>
        <Split>
          <ElementTree />
          <Divider>
            <DividerGrip />
          </Divider>
          <RequestEditor />
        </Split>
        <Marker $x={603} $y={578} $w={692} $h={123} />
        <Marker $x={616} $y={806} $w={1015} $h={136} />
      </WindowFrame>
    </Backdrop>
  );
}
